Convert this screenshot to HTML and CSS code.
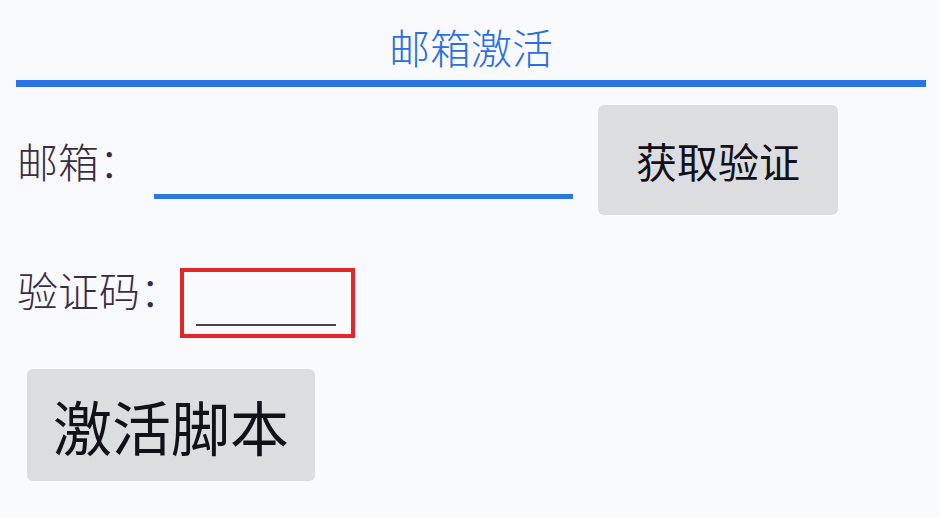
FILE: index.html
```html
<!DOCTYPE html>
<html lang="zh-CN">
<head>
<meta charset="utf-8">
<title>邮箱激活</title>
<link rel="stylesheet" href="styles.css">
</head>
<body>
<div class="page">
  <header class="header">
    <h1 class="title">邮箱激活</h1>
    <div class="title-rule"></div>
  </header>
  <div class="row row-email">
    <label class="label">邮箱：</label>
    <input class="email-input" type="text">
    <button class="btn btn-code">获取验证</button>
  </div>
  <div class="row row-code">
    <label class="label label-code">验证码：</label>
    <div class="code-box"><input class="code-input" type="text"></div>
  </div>
  <div class="row row-activate">
    <button class="btn btn-activate">激活脚本</button>
  </div>
</div>
</body>
</html>
```

FILE: styles.css
```css
html, body {
  margin: 0;
  padding: 0;
  background: #f9fafd;
}
body {
  width: 940px;
  height: 518px;
  overflow: hidden;
  font-family: "Noto Sans CJK SC", "Noto Sans", sans-serif;
}
.page {
  padding: 0 14px 0 16px;
}
.header {
  padding-top: 26px;
}
.title {
  margin: 0 0 13px 0;
  font-size: 41px;
  line-height: 41px;
  font-weight: 300;
  color: #2b6fe3;
  text-align: center;
}
.title-rule {
  height: 7px;
  background: #2a74e4;
}
.row {
  display: flex;
}
.row-email {
  margin-top: 18px;
  height: 110px;
  align-items: center;
}
.label {
  font-size: 41px;
  line-height: 41px;
  font-weight: 300;
  color: #3b2c45;
  padding-left: 1px;
}
.email-input {
  align-self: flex-end;
  margin: 0 0 16px 14px;
  width: 419px;
  height: 36px;
  padding: 0;
  border: none;
  border-bottom: 5px solid #2a78e4;
  background: transparent;
  outline: none;
  box-sizing: border-box;
}
.btn {
  border: none;
  border-radius: 6px;
  background: #dcdde1;
  color: #121018;
  font-family: "Noto Sans CJK SC", "Noto Sans", sans-serif;
  font-weight: 400;
  padding: 0;
  box-sizing: border-box;
}
.btn-code {
  margin-left: 25px;
  width: 240px;
  height: 110px;
  font-size: 41px;
  line-height: 41px;
}
.row-code {
  margin-top: 53px;
  align-items: flex-start;
}
.label-code {
  margin-top: 1px;
}
.code-box {
  margin-left: -1px;
  width: 175px;
  height: 70px;
  border: 4px solid #e3262a;
  box-sizing: border-box;
  display: flex;
  align-items: flex-end;
  padding: 0 15px 8px 12px;
}
.code-input {
  width: 100%;
  height: 30px;
  padding: 0;
  border: none;
  border-bottom: 2px solid #45434f;
  background: transparent;
  outline: none;
  box-sizing: border-box;
}
.row-activate {
  margin-top: 31px;
  padding-left: 11px;
}
.btn-activate {
  width: 288px;
  height: 112px;
  font-size: 59px;
  line-height: 59px;
}
```
